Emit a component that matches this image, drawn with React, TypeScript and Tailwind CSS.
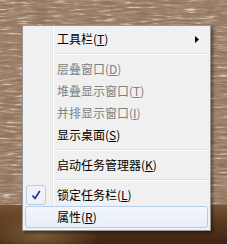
import React from "react";

const FONT = { fontFamily: '"Noto Sans CJK SC", "Noto Sans", sans-serif' };

function Acc({ k }: { k: string }) {
  return (
    <>
      (<span className="underline underline-offset-[1px] decoration-[1px]">{k}</span>)
    </>
  );
}

function Item({
  label,
  k,
  disabled,
  arrow,
  checked,
  selected,
}: {
  label: string;
  k: string;
  disabled?: boolean;
  arrow?: boolean;
  checked?: boolean;
  selected?: boolean;
}) {
  return (
    <div
      className={
        "flex h-[22px] items-center rounded-[3px] border " +
        (selected
          ? "border-[#b4cdeb] bg-[linear-gradient(to_bottom,#f3f7fc,#e6eef9)]"
          : "border-transparent")
      }
    >
      <div className="flex h-full w-[31px] shrink-0 items-center">
        {checked && (
          <div className="flex h-[20px] w-[20px] items-center justify-center rounded-[3px] border border-[#bccbe0] bg-[#eef2f8]">
            <svg width="10" height="10" viewBox="0 0 10 10">
              <path d="M1.5 5.5 L4 8.5 L8.8 1" fill="none" stroke="#1b2c8c" strokeWidth="1.6" />
            </svg>
          </div>
        )}
      </div>
      <div
        className={
          "flex-1 text-[12px] leading-[20px] " + (disabled ? "text-[#808080]" : "text-black")
        }
      >
        {label}
        <Acc k={k} />
      </div>
      {arrow && (
        <svg className="mr-[8px]" width="4" height="7" viewBox="0 0 4 7">
          <polygon points="0,0 4,3.5 0,7" fill="#000" />
        </svg>
      )}
    </div>
  );
}

function Sep() {
  return (
    <div className="flex h-[8px] flex-col pt-[3px] pl-[29px]">
      <div className="h-[1px] bg-[#e0e0e0]" />
      <div className="h-[1px] bg-white" />
    </div>
  );
}

export default function App() {
  return (
    <div className="relative h-[244px] w-[227px] overflow-hidden bg-[#4a2e1c]" style={FONT}>
      <div className="flex h-full flex-col">
        <svg className="block shrink-0" width="227" height="205">
          <filter id="wood" x="0" y="0" width="100%" height="100%">
            <feTurbulence type="fractalNoise" baseFrequency="0.06 0.45" numOctaves="3" seed="11" />
            <feColorMatrix
              type="matrix"
              values="1 0 0 0 0  1 0 0 0 0  1 0 0 0 0  0 0 0 0 1"
            />
            <feComponentTransfer>
              <feFuncR type="table" tableValues="0.24 0.27 0.3 0.34 0.42 0.7 0.88" />
              <feFuncG type="table" tableValues="0.14 0.16 0.19 0.22 0.3 0.6 0.8" />
              <feFuncB type="table" tableValues="0.09 0.1 0.12 0.15 0.22 0.5 0.7" />
            </feComponentTransfer>
          </filter>
          <rect width="227" height="205" filter="url(#wood)" />
        </svg>
        <div className="flex-1 bg-[radial-gradient(ellipse_60px_25px_at_40px_30px,rgba(170,130,80,0.55),transparent),linear-gradient(to_bottom,#7a5532,#5a3a20_40%,#3d2414)]" />
      </div>

      <div className="absolute left-[22px] top-[25px] w-[189px] border border-[#979797] bg-[linear-gradient(to_right,#f0f0f0_29px,#e2e3e3_29px,#e2e3e3_30px,#ffffff_30px,#ffffff_31px,#f0f0f0_31px)] p-[2px] shadow-[2px_2px_3px_rgba(0,0,0,0.45)]">
        <Item label="工具栏" k="T" arrow />
        <Sep />
        <Item label="层叠窗口" k="D" disabled />
        <Item label="堆叠显示窗口" k="T" disabled />
        <Item label="并排显示窗口" k="I" disabled />
        <Item label="显示桌面" k="S" />
        <Sep />
        <Item label="启动任务管理器" k="K" />
        <Sep />
        <Item label="锁定任务栏" k="L" checked />
        <Item label="属性" k="R" selected />
      </div>
    </div>
  );
}
